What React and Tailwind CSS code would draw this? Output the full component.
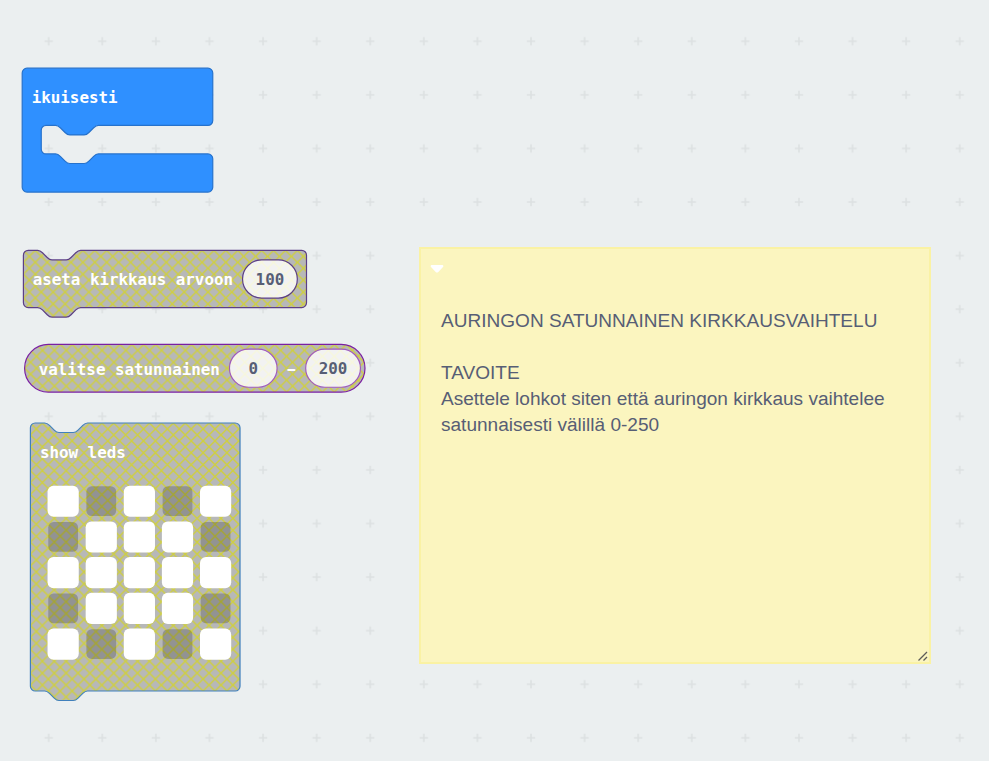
const SCALE = 1.191;
const NOTCH = "c2,0 3,1 4,2 l4,4 c1,1 2,2 4,2 h12 c2,0 3,-1 4,-2 l4,-4 c1,-1 2,-2 4,-2";
const NOTCH_BACK = "c-2,0 -3,1 -4,2 l-4,4 c-1,1 -2,2 -4,2 h-12 c-2,0 -3,-1 -4,-2 l-4,-4 c-1,-1 -2,-2 -4,-2";

const statementPath = (w, h) =>
  `M0,4 a4,4 0 0 1 4,-4 h8 ${NOTCH} H${w - 4} a4,4 0 0 1 4,4 V${h - 4} a4,4 0 0 1 -4,4 H48 ${NOTCH_BACK} H4 a4,4 0 0 1 -4,-4 z`;

const foreverPath = `M0,4 a4,4 0 0 1 4,-4 H156 a4,4 0 0 1 4,4 V44 a4,4 0 0 1 -4,4 H64 ${NOTCH_BACK} H20 a4,4 0 0 0 -4,4 V68 a4,4 0 0 0 4,4 H28 ${NOTCH} H156 a4,4 0 0 1 4,4 V100 a4,4 0 0 1 -4,4 H4 a4,4 0 0 1 -4,-4 z`;

// Diagonal cross-hatching for disabled blocks, drawn over one large tile.
const hatchLines = Array.from({ length: 61 }, (_, i) => {
  const x = (i - 30) * 10;
  return `M${x},0 l300,300 M${x + 300},0 l-300,300`;
}).join(" ");

const leds = ["#.#.#", ".###.", "#####", ".###.", "#.#.#"];

function Label({ x, y, n, className = "fill-white", children }) {
  return (
    <text
      x={x}
      y={y}
      textLength={n * 8.01}
      lengthAdjust="spacingAndGlyphs"
      className={`font-['DejaVu_Sans_Mono',monospace] text-[13.9px] font-bold ${className}`}
    >
      {children}
    </text>
  );
}

function Field({ x, y, w, stroke, n, children }) {
  return (
    <g>
      <rect x={x} y={y} width={w} height="32" rx="16" fill="#ffffff" fillOpacity="0.82" stroke={stroke} />
      <Label x={x + (w - n * 8.01) / 2} y={y + 21.2} n={n} className="fill-[#575e75]">
        {children}
      </Label>
    </g>
  );
}

function Block({ x, y, children }) {
  return <g transform={`translate(${x} ${y}) scale(${SCALE})`}>{children}</g>;
}

export default function App() {
  return (
    <main className="relative h-[761px] w-[989px] overflow-hidden bg-[#ebeff0]">
      <svg className="block h-full w-full" viewBox="0 0 989 761">
        <defs>
          <pattern id="grid" x="21.9" y="14.5" width="53.59" height="53.58" patternUnits="userSpaceOnUse">
            <path d="M22.6,26.8 h8.4 M26.8,22.6 v8.4" stroke="#dde1e2" strokeWidth="1.6" />
          </pattern>
          <pattern id="hatch" x="-5" y="-5" width="300" height="300" patternUnits="userSpaceOnUse">
            <rect width="300" height="300" fill="#b7b8b8" />
            <path d={hatchLines} transform="translate(5 5)" stroke="#cfcf40" strokeWidth="1.2" />
            <path d={hatchLines} transform="translate(5 -295)" stroke="#cfcf40" strokeWidth="1.2" />
          </pattern>
        </defs>
        <rect x="40" y="30" width="949" height="731" fill="url(#grid)" />

        <Block x={22.2} y={68.2}>
          <path d={foreverPath} fill="#2f90ff" stroke="#2672cc" />
          <Label x={8} y={29.3} n={9}>ikuisesti</Label>
        </Block>

        <Block x={23.4} y={250.4}>
          <path d={statementPath(237.7, 48)} fill="url(#hatch)" stroke="#5c3f86" />
          <Label x={7.8} y={29.3} n={21}>aseta kirkkaus arvoon</Label>
          <Field x={184} y={8} w={46} stroke="#5c3f86" n={3}>100</Field>
        </Block>

        <Block x={24.6} y={344.4}>
          <rect width="285.8" height="40" rx="20" fill="url(#hatch)" stroke="#7a1fa2" />
          <Label x={11.8} y={25.3} n={19}>valitse satunnainen</Label>
          <Field x={172} y={4} w={40} stroke="#a05bbd" n={1}>0</Field>
          <Label x={220.8} y={25.2} n={0.8}>–</Label>
          <Field x={236} y={4} w={46} stroke="#a05bbd" n={3}>200</Field>
        </Block>

        <Block x={30.4} y={423}>
          <path d={statementPath(176, 225)} fill="url(#hatch)" stroke="#4080bc" />
          <Label x={8} y={29.3} n={9}>show leds</Label>
          {leds.map((row, r) =>
            [...row].map((led, c) =>
              led === "#" ? (
                <rect key={`${r}-${c}`} x={14.4 + c * 32} y={52.6 + r * 30} width="26.2" height="26.2" rx="5" fill="#fff" />
              ) : (
                <rect key={`${r}-${c}`} x={15} y={53.1} width="25" height="25" rx="4.5" transform={`translate(${c * 32} ${r * 30})`} fill="#000" fillOpacity="0.2" />
              )
            )
          )}
        </Block>
      </svg>

      <section className="absolute left-[419px] top-[247px] flex h-[417px] w-[512px] flex-col border-2 border-[#faf2a4] bg-[#fbf5bf] px-5 pt-[59px] font-['Liberation_Sans',Arial,sans-serif] text-[19.06px] leading-[26px] text-[#575e75]">
        <svg className="absolute left-[9px] top-[15px] h-[9px] w-[14px]" viewBox="0 0 14 9">
          <path d="M1.5,1 H12.5 Q14,1.5 13,3 L8.3,8 Q7,9.2 5.7,8 L1,3 Q0,1.5 1.5,1 z" fill="#fff" />
        </svg>
        <p>AURINGON SATUNNAINEN KIRKKAUSVAIHTELU</p>
        <p className="mt-[26px]">TAVOITE</p>
        <p className="whitespace-nowrap">Asettele lohkot siten että auringon kirkkaus vaihtelee</p>
        <p>satunnaisesti välillä 0-250</p>
        <svg className="absolute bottom-px right-px h-[10px] w-[10px]" viewBox="0 0 10 10">
          <path d="M0.5,9.5 L9,1 M5.5,9.5 L9,6" stroke="#5c5c58" strokeWidth="1.3" />
        </svg>
      </section>
    </main>
  );
}
